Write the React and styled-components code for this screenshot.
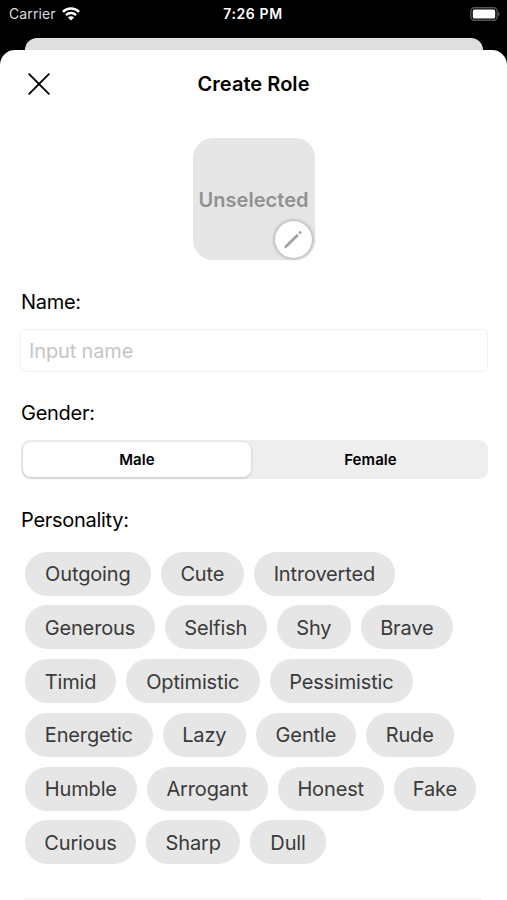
import React, { useState } from "react";
import styled, { createGlobalStyle } from "styled-components";

const GlobalStyle = createGlobalStyle`
  * { box-sizing: border-box; }
  body { margin: 0; background: #000; overflow: hidden; }
  button, input { font: inherit; color: inherit; margin: 0; }
`;

const Screen = styled.div`
  width: 507px;
  height: 900px;
  overflow: hidden;
  display: flex;
  flex-direction: column;
  background: #000;
  color: #000;
  font-family: Inter, "Liberation Sans", sans-serif;
`;

const StatusBar = styled.header`
  flex: none;
  height: 38px;
  padding: 0 7px 10px 9px;
  display: grid;
  grid-template-columns: 1fr auto 1fr;
  align-items: center;
  color: #fff;
  font-size: 14px;
  line-height: 18px;
`;

const Carrier = styled.div`
  display: flex;
  align-items: center;
  gap: 6px;
  color: #dcdcdc;
  letter-spacing: 0.12px;
`;

const Clock = styled.time`
  font-weight: 600;
  font-size: 14px;
  letter-spacing: 0.6px;
  margin: 0 1px 0 -2px;
`;

const BatterySlot = styled.div`
  display: flex;
  justify-content: flex-end;
`;

const BackSheet = styled.div`
  flex: none;
  height: 12px;
  margin: 0 24px 0 25px;
  border-radius: 12px 12px 0 0;
  background: #dfdfdf;
`;

const Sheet = styled.main`
  flex: 1;
  min-height: 0;
  padding: 0 20px;
  border-radius: 15px 15px 0 0;
  background: #fff;
  display: flex;
  flex-direction: column;
`;

const TitleBar = styled.div`
  flex: none;
  height: 68px;
  display: grid;
  grid-template-columns: 38px 1fr 38px;
  align-items: center;
`;

const CloseButton = styled.button`
  display: flex;
  justify-content: center;
  padding: 0;
  border: 0;
  background: none;
`;

const Title = styled.h1`
  margin: 0;
  text-align: center;
  font-size: 20px;
  font-weight: 600;
  letter-spacing: 0.05px;
`;

const Avatar = styled.div`
  flex: none;
  position: relative;
  align-self: center;
  width: 122px;
  height: 122px;
  margin-top: 20px;
  padding-top: 1px;
  border-radius: 20px;
  background: #e6e6e6;
  display: flex;
  align-items: center;
  justify-content: center;
  color: #919193;
  font-size: 20px;
  font-weight: 600;
  letter-spacing: 0.05px;
`;

const EditBadge = styled.button`
  position: absolute;
  right: 3px;
  bottom: 2px;
  width: 37px;
  height: 37px;
  padding: 0;
  border: 0;
  border-radius: 50%;
  background: #fff;
  box-shadow: 0 0 4px rgba(0, 0, 0, 0.4);
  display: flex;
  align-items: center;
  justify-content: center;
`;

const Label = styled.div`
  flex: none;
  margin: ${(p) => p.$top}px 0 0 1px;
  height: 26px;
  line-height: 26px;
  font-size: 20px;
  letter-spacing: -0.28px;
`;

const NameInput = styled.input`
  flex: none;
  width: 468px;
  height: 43px;
  margin-top: 14px;
  padding: 0 8px;
  border: 1.5px solid #f0f0f0;
  border-radius: 6px;
  background: #fff;
  font-size: 20px;
  letter-spacing: -0.15px;
  outline: none;
  &::placeholder { color: #c5c5c7; opacity: 1; }
`;

const Segments = styled.div`
  flex: none;
  height: 39px;
  width: 467px;
  margin: 14px 0 0 1px;
  padding: 2px;
  border-radius: 9px;
  background: #eee;
  display: grid;
  grid-template-columns: 228px 1fr;
`;

const Segment = styled.button`
  border: 0;
  padding: 0 0 0 ${(p) => (p.$active ? 0 : 4)}px;
  border-radius: 8px;
  background: ${(p) => (p.$active ? "#fff" : "transparent")};
  box-shadow: ${(p) => (p.$active ? "0 1px 3px rgba(0,0,0,.2)" : "none")};
  font-size: 15px;
  font-weight: 600;
  letter-spacing: 0.08px;
`;

const TraitList = styled.div`
  flex: none;
  margin: 18.5px 0 0 5px;
  display: flex;
  flex-direction: column;
  gap: 9.8px;
`;

const TraitRow = styled.div`
  display: flex;
  gap: 10px;
`;

const Chip = styled.button`
  flex: none;
  width: ${(p) => p.$width}px;
  height: 44px;
  padding: 1px 0 0;
  border: 0;
  border-radius: 22px;
  background: #e6e6e6;
  color: #3a3a3a;
  font-size: 20px;
  letter-spacing: -0.15px;
  white-space: nowrap;
`;

const Divider = styled.hr`
  flex: none;
  width: 458px;
  height: 2px;
  margin: 33.5px 0 0 4px;
  border: 0;
  background: #f3f3f3;
`;

const traitRows = [
  [["Outgoing", 125.7], ["Cute", 83.3], ["Introverted", 140.8]],
  [["Generous", 129.8], ["Selfish", 102], ["Shy", 74], ["Brave", 92]],
  [["Timid", 91], ["Optimistic", 133.6], ["Pessimistic", 143.5]],
  [["Energetic", 127.7], ["Lazy", 83.2], ["Gentle", 100], ["Rude", 87.7]],
  [["Humble", 111.7], ["Arrogant", 121], ["Honest", 106], ["Fake", 82.3]],
  [["Curious", 111], ["Sharp", 94.4], ["Dull", 75.3]],
];

const WifiIcon = () => (
  <svg width="18" height="14" viewBox="0 0 18 14" fill="none" stroke="#fff" strokeWidth="2.4">
    <path d="M.9 4.9a11.5 11.5 0 0 1 16.2 0" />
    <path d="M3.9 8.1a7.2 7.2 0 0 1 10.2 0" />
    <path d="M9 13.6 5.9 10.5a4.4 4.4 0 0 1 6.2 0Z" fill="#fff" stroke="none" />
  </svg>
);

const BatteryIcon = () => (
  <svg width="30" height="14" viewBox="0 0 30 14">
    <rect x=".8" y=".8" width="26.4" height="12.4" rx="3.6" fill="none" stroke="#555" strokeWidth="1.4" />
    <rect x="2.8" y="2.5" width="22.4" height="9" rx="1.5" fill="#fff" />
    <path d="M28.3 4.8q1.5.7 1.5 2.2t-1.5 2.2z" fill="#555" />
  </svg>
);

const CloseIcon = () => (
  <svg width="22" height="22" viewBox="0 0 22 22" stroke="#000" strokeWidth="1.9" strokeLinecap="round">
    <path d="M1.2 1.2 20.8 20.8M20.8 1.2 1.2 20.8" />
  </svg>
);

const PencilIcon = () => (
  <svg width="20" height="20" viewBox="0 0 20 20" fill="#a0a0a0">
    <path d="M2 15.6 14 3.8l1.9 1.9-12 11.8-2.7.9z" />
    <path d="m15.4 2.4.9-.9q.9-.8 1.7 0l.3.3q.8.8 0 1.7l-.9.9z" />
  </svg>
);

export default function App() {
  const [gender, setGender] = useState("Male");
  return (
    <Screen>
      <GlobalStyle />
      <StatusBar>
        <Carrier>Carrier <WifiIcon /></Carrier>
        <Clock>7:26 PM</Clock>
        <BatterySlot><BatteryIcon /></BatterySlot>
      </StatusBar>
      <BackSheet />
      <Sheet>
        <TitleBar>
          <CloseButton aria-label="Close"><CloseIcon /></CloseButton>
          <Title>Create Role</Title>
        </TitleBar>
        <Avatar>
          Unselected
          <EditBadge aria-label="Edit avatar"><PencilIcon /></EditBadge>
        </Avatar>
        <Label $top={29}>Name:</Label>
        <NameInput placeholder="Input name" />
        <Label $top={28}>Gender:</Label>
        <Segments>
          {["Male", "Female"].map((g) => (
            <Segment key={g} $active={g === gender} onClick={() => setGender(g)}>{g}</Segment>
          ))}
        </Segments>
        <Label $top={28}>Personality:</Label>
        <TraitList>
          {traitRows.map((row) => (
            <TraitRow key={row[0][0]}>
              {row.map(([name, width]) => (
                <Chip key={name} $width={width}>{name}</Chip>
              ))}
            </TraitRow>
          ))}
        </TraitList>
        <Divider />
      </Sheet>
    </Screen>
  );
}
